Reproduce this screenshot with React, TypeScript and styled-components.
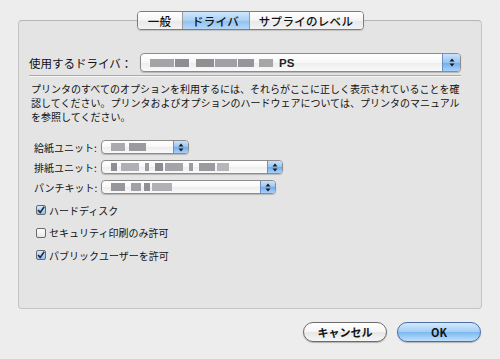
import React from "react";
import styled, { createGlobalStyle } from "styled-components";

const GlobalStyle = createGlobalStyle`
  html, body {
    margin: 0;
    padding: 0;
    background: #ededed;
  }
  body {
    font-family: "Noto Sans CJK JP", "Noto Sans", sans-serif;
    color: #111;
  }
`;

//style
const Window = styled.div`
  width: 500px;
  height: 359px;
  box-sizing: border-box;
  padding: 20px 18px 0 18px;
  background: #ededed;
  display: flex;
  flex-direction: column;
`;

const Panel = styled.div`
  height: 289px;
  box-sizing: border-box;
  border: 1px solid #c4c4c4;
  border-top-color: #b4b4b4;
  border-radius: 4px;
  background: #e4e4e4;
  padding: 0 20px 0 10px;
  display: flex;
  flex-direction: column;
`;

const TabBar = styled.div`
  align-self: center;
  margin-top: -10px;
  margin-left: 10px;
  display: flex;
  height: 19px;
  box-sizing: border-box;
  border: 1px solid #7d7d7d;
  border-radius: 4px;
  overflow: hidden;
  box-shadow: 0 1px 1px rgba(0, 0, 0, 0.15);
`;

const Tab = styled.div<{ $active?: boolean; $w: number }>`
  width: ${({ $w }) => $w}px;
  display: flex;
  align-items: center;
  justify-content: center;
  font-size: 11.5px;
  font-weight: 500;
  letter-spacing: 0.3px;
  color: #111;
  background: ${({ $active }) =>
    $active
      ? "linear-gradient(#cfe6fb 0%, #a9d0f5 50%, #8fc0f0 51%, #b4d8f8 100%)"
      : "linear-gradient(#ffffff 0%, #f4f4f4 50%, #e8e8e8 51%, #f3f3f3 100%)"};
  & + & {
    border-left: 1px solid #9a9a9a;
  }
`;

const DriverRow = styled.div`
  margin-top: 23px;
  display: flex;
  align-items: center;
  height: 19px;
`;

const DriverLabel = styled.div`
  font-size: 11.5px;
  width: 111px;
  white-space: nowrap;
`;

const Popup = styled.div<{ $w: number; $h: number }>`
  width: ${({ $w }) => $w}px;
  height: ${({ $h }) => $h}px;
  box-sizing: border-box;
  border: 1px solid #8c8c8c;
  border-radius: 4px;
  background: linear-gradient(#ffffff 0%, #f7f7f7 50%, #ededed 51%, #fafafa 100%);
  box-shadow: 0 1px 1px rgba(0, 0, 0, 0.2);
  display: flex;
  align-items: center;
  overflow: hidden;
`;

const PopupValue = styled.div`
  flex: 1;
  display: flex;
  align-items: center;
  padding-left: 9px;
`;

const Blur = styled.span<{ $w: number; $gap?: number; $tone?: string }>`
  display: inline-block;
  width: ${({ $w }) => $w}px;
  height: 8px;
  margin-right: ${({ $gap }) => ($gap !== undefined ? `${$gap}px` : "2px")};
  background: ${({ $tone }) => $tone || "#9d9da2"};
  filter: blur(0.7px);
`;

const PsText = styled.span`
  font-family: "Liberation Sans", Arial, sans-serif;
  font-size: 11.5px;
  font-weight: 700;
  margin-left: 2px;
  color: #222;
`;

const Stepper = styled.div<{ $w: number }>`
  width: ${({ $w }) => $w}px;
  height: 100%;
  border-left: 1px solid #6f8fbf;
  background: linear-gradient(#c9e2fb 0%, #96c4f3 50%, #6eacee 51%, #a7d2fa 100%);
  display: flex;
  align-items: center;
  justify-content: center;
`;

const Separator = styled.div`
  margin-top: 3px;
  height: 1px;
  background: #a9a9a9;
  border-bottom: 1px solid #f6f6f6;
`;

const Description = styled.p`
  margin: 5px 0 0 2px;
  font-size: 10px;
  line-height: 14px;
  white-space: nowrap;
  color: #111;
`;

const Options = styled.div`
  margin-top: 16px;
  padding-left: 5px;
  display: flex;
  flex-direction: column;
  gap: 6px;
`;

const OptionRow = styled.div`
  display: flex;
  align-items: center;
  height: 14px;
`;

const OptionLabel = styled.div`
  width: 67px;
  font-size: 10px;
  white-space: nowrap;
`;

const Checks = styled.div`
  margin-top: 10px;
  padding-left: 7px;
  display: flex;
  flex-direction: column;
  gap: 10.5px;
`;

const CheckRow = styled.label`
  display: flex;
  align-items: center;
  gap: 3px;
  height: 12px;
  font-size: 10px;
`;

const Box = styled.span<{ $on?: boolean }>`
  width: 10px;
  height: 10px;
  box-sizing: border-box;
  border: 1px solid #6a6a6a;
  border-radius: 2px;
  background: ${({ $on }) =>
    $on ? "linear-gradient(#d5e9fc, #8ec1f1)" : "linear-gradient(#ffffff, #e6e6e6)"};
  display: flex;
  align-items: center;
  justify-content: center;
`;

const Footer = styled.div`
  margin-top: 13px;
  display: flex;
  justify-content: flex-end;
  gap: 10px;
  padding-right: 1px;
`;

const Button = styled.button<{ $primary?: boolean }>`
  width: 84px;
  height: 20px;
  border: 1px solid ${({ $primary }) => ($primary ? "#4b6fa3" : "#6b6b6b")};
  border-radius: 10px;
  font-family: "Noto Sans CJK JP", "Liberation Sans", sans-serif;
  font-size: 11px;
  font-weight: 700;
  color: #111;
  padding: 0;
  box-shadow: 0 1px 1px rgba(0, 0, 0, 0.25);
  background: ${({ $primary }) =>
    $primary
      ? "linear-gradient(#d3e9fd 0%, #a2cdf5 50%, #7cb8f0 51%, #bde1fc 100%)"
      : "linear-gradient(#ffffff 0%, #f5f5f5 50%, #e6e6e6 51%, #f6f6f6 100%)"};
`;

const Arrows: React.FC = () => (
  <svg width="6" height="9" viewBox="0 0 6 9">
    <path d="M3 0.5 L5.5 3.5 H0.5 Z" fill="#1a1a1a" />
    <path d="M3 8.5 L5.5 5.5 H0.5 Z" fill="#1a1a1a" />
  </svg>
);

const Tick: React.FC = () => (
  <svg width="8" height="8" viewBox="0 0 8 8">
    <path d="M1 4 L3.2 6.4 L7.2 0.8" fill="none" stroke="#1c2b44" strokeWidth="1.6" />
  </svg>
);

type Piece = [number, number, string?];

const Blurred: React.FC<{ pieces: Piece[] }> = ({ pieces }) => (
  <>
    {pieces.map(([w, gap, tone], i) => (
      <Blur key={i} $w={w} $gap={gap} $tone={tone} />
    ))}
  </>
);

interface SelectProps {
  width: number;
  pieces: Piece[];
}

const SmallSelect: React.FC<SelectProps> = ({ width, pieces }) => (
  <Popup $w={width} $h={14}>
    <PopupValue>
      <Blurred pieces={pieces} />
    </PopupValue>
    <Stepper $w={14}>
      <Arrows />
    </Stepper>
  </Popup>
);

export default function App() {
  return (
    <>
      <GlobalStyle />
      <Window>
        <Panel>
          <TabBar>
            <Tab $w={44}>一般</Tab>
            <Tab $w={66} $active>
              ドライバ
            </Tab>
            <Tab $w={113}>サプライのレベル</Tab>
          </TabBar>

          <DriverRow>
            <DriverLabel>使用するドライバ：</DriverLabel>
            <Popup $w={321} $h={19}>
              <PopupValue>
                <Blurred
                  pieces={[
                    [24, 1, "#a3a3a8"],
                    [14, 7, "#8d8d92"],
                    [18, 1, "#8f8f94"],
                    [22, 1, "#a0a0a5"],
                    [16, 5, "#95959a"],
                    [14, 4, "#a6a6aa"],
                  ]}
                />
                <PsText>PS</PsText>
              </PopupValue>
              <Stepper $w={17}>
                <Arrows />
              </Stepper>
            </Popup>
          </DriverRow>
          <Separator />

          <Description>
            プリンタのすべてのオプションを利用するには、それらがここに正しく表示されていることを確
            <br />
            認してください。プリンタおよびオプションのハードウェアについては、プリンタのマニュアル
            <br />
            を参照してください。
          </Description>

          <Options>
            <OptionRow>
              <OptionLabel>給紙ユニット:</OptionLabel>
              <SmallSelect
                width={88}
                pieces={[
                  [14, 4, "#a9a9ae"],
                  [17, 0, "#9a9a9f"],
                ]}
              />
            </OptionRow>
            <OptionRow>
              <OptionLabel>排紙ユニット:</OptionLabel>
              <SmallSelect
                width={182}
                pieces={[
                  [6, 4, "#8e8e93"],
                  [18, 6, "#b0b0b4"],
                  [4, 6, "#9b9ba0"],
                  [8, 2, "#8a8a8f"],
                  [18, 6, "#a3a3a8"],
                  [4, 6, "#9b9ba0"],
                  [16, 2, "#9a9a9f"],
                  [12, 0, "#b6b6ba"],
                ]}
              />
            </OptionRow>
            <OptionRow>
              <OptionLabel>パンチキット:</OptionLabel>
              <SmallSelect
                width={175}
                pieces={[
                  [14, 6, "#96969b"],
                  [10, 3, "#a0a0a5"],
                  [6, 2, "#8f8f94"],
                  [20, 0, "#b1b1b5"],
                ]}
              />
            </OptionRow>
          </Options>

          <Checks>
            <CheckRow>
              <Box $on>
                <Tick />
              </Box>
              ハードディスク
            </CheckRow>
            <CheckRow>
              <Box />
              セキュリティ印刷のみ許可
            </CheckRow>
            <CheckRow>
              <Box $on>
                <Tick />
              </Box>
              パブリックユーザーを許可
            </CheckRow>
          </Checks>
        </Panel>

        <Footer>
          <Button>キャンセル</Button>
          <Button $primary>OK</Button>
        </Footer>
      </Window>
    </>
  );
}
